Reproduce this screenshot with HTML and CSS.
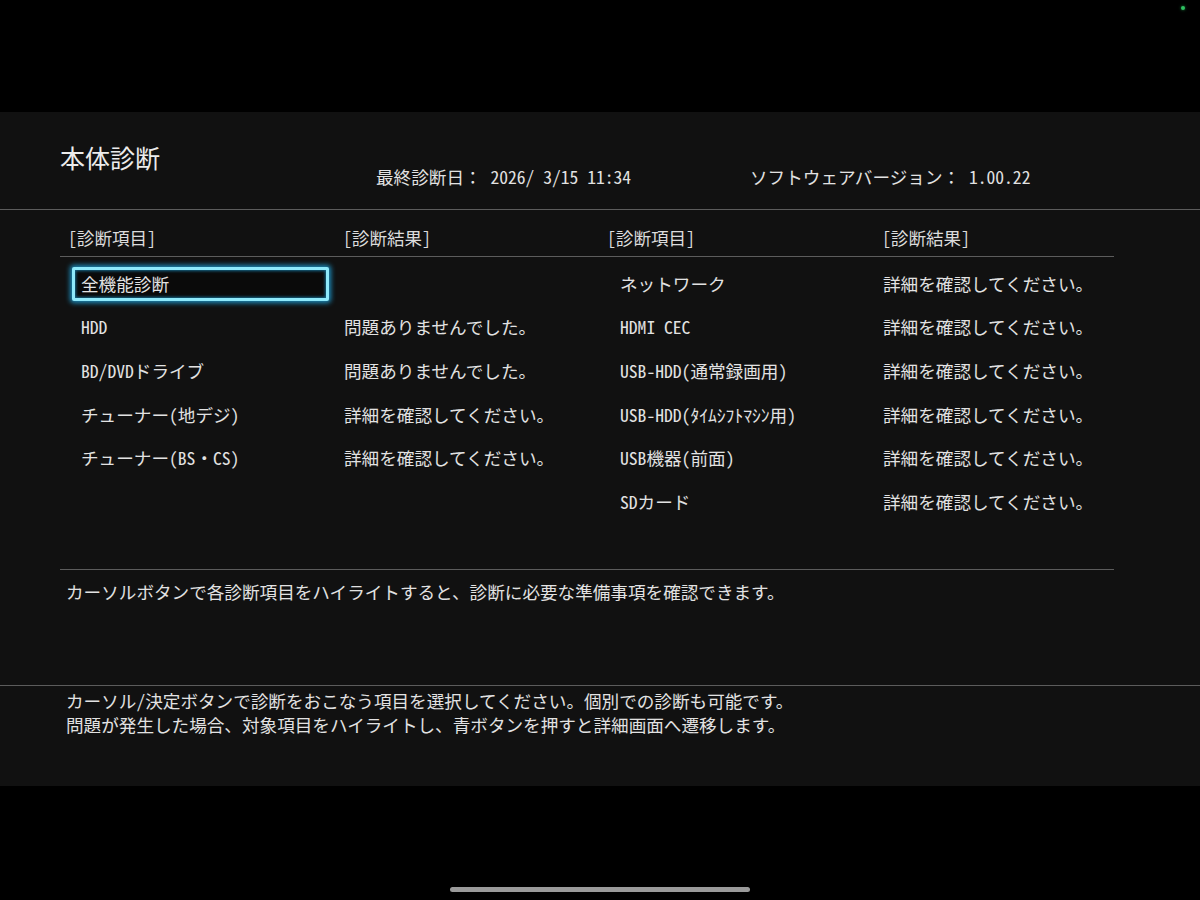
FILE: index.html
```html
<!DOCTYPE html>
<html lang="ja">
<head>
<meta charset="utf-8">
<title>本体診断</title>
<link rel="stylesheet" href="styles.css">
</head>
<body>
<div class="screen">
  <div class="topbar"><span class="led"></span></div>
  <div class="panel">
    <div class="header">
      <h1 class="title">本体診断</h1>
      <div class="meta meta-date">最終診断日：<span class="lat"> 2026/ 3/15 11:34</span></div>
      <div class="meta">ソフトウェアバージョン：<span class="lat"> 1.00.22</span></div>
    </div>
    <div class="content">
      <div class="thead">
        <div class="th"><span class="lat">[</span>診断項目<span class="lat">]</span></div>
        <div class="th"><span class="lat">[</span>診断結果<span class="lat">]</span></div>
        <div class="th"><span class="lat">[</span>診断項目<span class="lat">]</span></div>
        <div class="th"><span class="lat">[</span>診断結果<span class="lat">]</span></div>
      </div>
      <div class="tbody">
        <div class="item focused"><span class="label">全機能診断</span></div>
        <div class="result"></div>
        <div class="item">ネットワーク</div>
        <div class="result">詳細を確認してください。</div>

        <div class="item"><span class="lat">HDD</span></div>
        <div class="result">問題ありませんでした。</div>
        <div class="item"><span class="lat">HDMI CEC</span></div>
        <div class="result">詳細を確認してください。</div>

        <div class="item"><span class="lat">BD/DVD</span>ドライブ</div>
        <div class="result">問題ありませんでした。</div>
        <div class="item"><span class="lat">USB-HDD(</span>通常録画用<span class="lat">)</span></div>
        <div class="result">詳細を確認してください。</div>

        <div class="item">チューナー<span class="lat">(</span>地デジ<span class="lat">)</span></div>
        <div class="result">詳細を確認してください。</div>
        <div class="item"><span class="lat">USB-HDD(</span><span class="small">ﾀｲﾑｼﾌﾄﾏｼﾝ</span>用<span class="lat">)</span></div>
        <div class="result">詳細を確認してください。</div>

        <div class="item">チューナー<span class="lat">(BS</span>・<span class="lat">CS)</span></div>
        <div class="result">詳細を確認してください。</div>
        <div class="item"><span class="lat">USB</span>機器<span class="lat">(</span>前面<span class="lat">)</span></div>
        <div class="result">詳細を確認してください。</div>

        <div class="item"></div>
        <div class="result"></div>
        <div class="item"><span class="lat">SD</span>カード</div>
        <div class="result">詳細を確認してください。</div>
      </div>
      <div class="hint">カーソルボタンで各診断項目をハイライトすると、診断に必要な準備事項を確認できます。</div>
    </div>
    <div class="footer">
      <p>カーソル<span class="lat">/</span>決定ボタンで診断をおこなう項目を選択してください。個別での診断も可能です。</p>
      <p>問題が発生した場合、対象項目をハイライトし、青ボタンを押すと詳細画面へ遷移します。</p>
    </div>
  </div>
  <div class="bottombar"><span class="home"></span></div>
</div>
</body>
</html>
```
FILE: styles.css
```css
html, body {
  margin: 0;
  padding: 0;
  background: #000;
}
body {
  font-family: "Noto Sans CJK JP", "Noto Sans", sans-serif;
  color: #e2e2e2;
  font-size: 17.6px;
}
.screen {
  width: 1200px;
  height: 900px;
  display: flex;
  flex-direction: column;
}
.topbar {
  height: 112px;
  flex: none;
  position: relative;
}
.led {
  position: absolute;
  left: 1181px;
  top: 6px;
  width: 4px;
  height: 4px;
  border-radius: 50%;
  background: #2ec060;
  box-shadow: 0 0 3px #1a8a40;
}
.panel {
  height: 674px;
  flex: none;
  background: #111111;
  display: flex;
  flex-direction: column;
}
.header {
  box-sizing: border-box;
  height: 98px;
  border-bottom: 1px solid #5c5c5c;
  display: flex;
  align-items: flex-start;
}
.title {
  margin: 28px 0 0 60px;
  width: 316px;
  font-size: 25px;
  font-weight: normal;
  line-height: 34px;
  color: #ececec;
}
.meta {
  margin-top: 53px;
  line-height: 24px;
  white-space: pre;
}
.meta-date {
  width: 374px;
}
.lat {
  font-feature-settings: "hwid" 1;
  white-space: pre;
}
.small {
  font-feature-settings: "hwid" 1;
}
.content {
  margin: 0 86px 0 60px;
  display: flex;
  flex-direction: column;
}
.thead, .tbody {
  display: grid;
  grid-template-columns: 275px 264px 275px 240px;
}
.thead {
  height: 47px;
  box-sizing: border-box;
  border-bottom: 1px solid #5c5c5c;
}
.th {
  padding: 16px 0 0 8px;
  line-height: 24px;
  color: #dcdcdc;
}
.tbody {
  grid-template-rows: repeat(6, 43.6px);
  padding: 5px 0 45px;
}
.item, .result {
  line-height: 24px;
  display: flex;
  align-items: center;
  white-space: nowrap;
}
.item {
  padding-left: 21px;
  position: relative;
}
.result {
  padding-left: 9px;
}
.focused::before {
  content: "";
  position: absolute;
  left: 12px;
  right: 6px;
  top: 5px;
  bottom: 5px;
  background: #0a0a0a;
  border: 3px solid #8ee9fb;
  border-radius: 2px;
  box-shadow: 0 0 5px 2px rgba(30, 170, 230, 0.8), inset 0 0 3px 1px rgba(30, 170, 230, 0.6);
}
.label {
  position: relative;
}
.hint {
  height: 116px;
  box-sizing: border-box;
  border-top: 1px solid #5c5c5c;
  padding: 10px 0 0 6px;
  line-height: 24px;
}
.footer {
  border-top: 1px solid #5c5c5c;
  padding: 3px 0 0 66px;
  flex: 1;
}
.footer p {
  margin: 0;
  line-height: 24px;
}
.bottombar {
  flex: 1;
  position: relative;
}
.home {
  position: absolute;
  left: 450px;
  top: 101px;
  width: 300px;
  height: 5px;
  border-radius: 3px;
  background: #9a9a9a;
}
```
